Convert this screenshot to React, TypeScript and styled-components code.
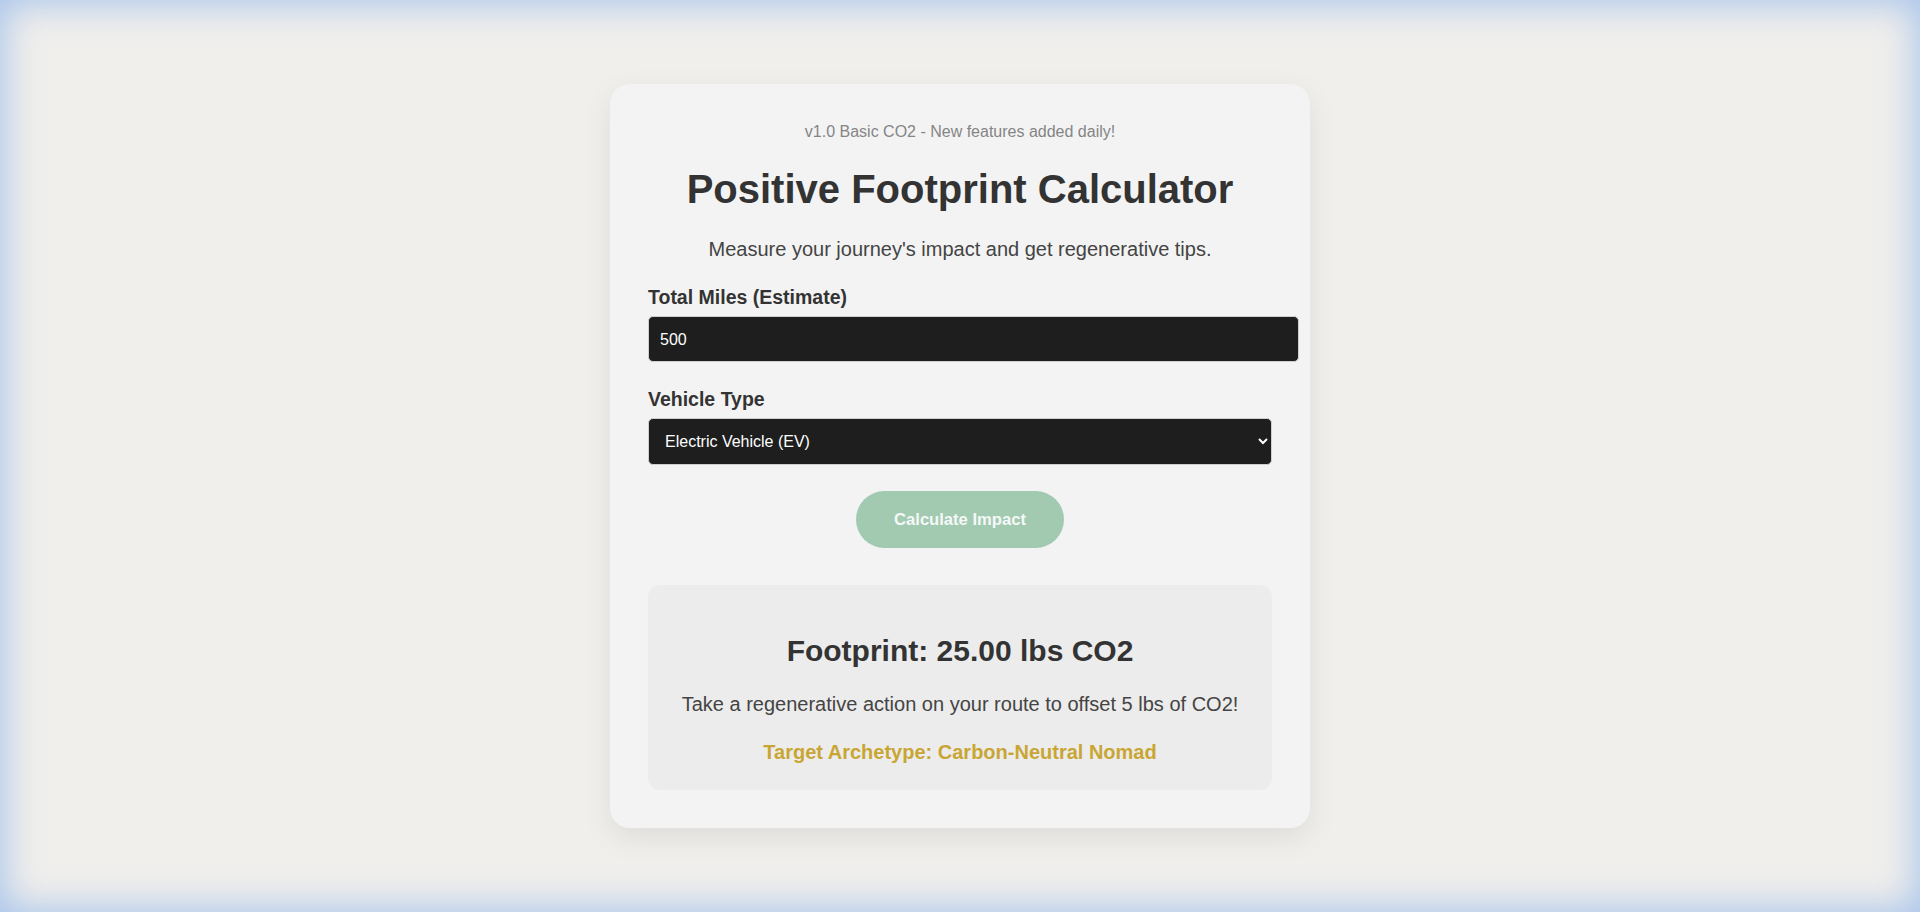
import React from "react";
import styled, { createGlobalStyle } from "styled-components";

const GlobalStyle = createGlobalStyle`
  html, body {
    margin: 0;
    padding: 0;
    background: #f0efec;
  }
  * { box-sizing: border-box; }
  body {
    font-family: "Liberation Sans", Arial, sans-serif;
    color: #333;
  }
`;

const Page = styled.main`
  min-height: 100vh;
  display: flex;
  align-items: center;
  justify-content: center;
  background: #f0efec;
  box-shadow: inset 0 0 36px 4px rgba(110, 160, 235, 0.55);
`;

const Card = styled.section`
  width: 700px;
  background: #f3f3f3;
  border-radius: 20px;
  padding: 39px 38px 38px;
  box-shadow: 0 10px 30px rgba(0, 0, 0, 0.08);
  display: flex;
  flex-direction: column;
`;

const Version = styled.p`
  margin: 0;
  font-size: 16px;
  color: #858585;
  text-align: center;
`;

const Title = styled.h1`
  margin: 25px 0 0;
  font-size: 40px;
  line-height: 46px;
  font-weight: 700;
  color: #333;
  text-align: center;
`;

const Subtitle = styled.p`
  margin: 26px 0 0;
  font-size: 20px;
  line-height: 23px;
  color: #444;
  text-align: center;
`;

const Field = styled.div<{ $gap: number }>`
  display: flex;
  flex-direction: column;
  margin-top: ${(p) => p.$gap}px;
`;

const Label = styled.label`
  font-size: 19.5px;
  line-height: 22px;
  font-weight: 700;
  color: #333;
  margin-bottom: 8px;
`;

const TextInput = styled.input`
  box-sizing: content-box;
  width: 100%;
  height: 19px;
  padding: 13px 14px 12px 11px;
  border: 1px solid #cfcfcf;
  border-radius: 5px;
  background: #1e1e1e;
  color: #fff;
  font-family: "Liberation Sans", Arial, sans-serif;
  font-size: 16px;
  outline: none;
`;

const Select = styled.select`
  width: 100%;
  height: 47px;
  padding: 0 10px 0 12px;
  border: 1px solid #cfcfcf;
  border-radius: 5px;
  background: #1e1e1e;
  color: #fff;
  font-family: "Liberation Sans", Arial, sans-serif;
  font-size: 16px;
  outline: none;
`;

const ButtonRow = styled.div`
  display: flex;
  justify-content: center;
  margin-top: 26px;
`;

const Button = styled.button`
  width: 208px;
  height: 57px;
  border: none;
  border-radius: 29px;
  background: #a1cab1;
  color: #f5f8f6;
  font-family: "Liberation Sans", Arial, sans-serif;
  font-size: 16.6px;
  font-weight: 700;
  cursor: pointer;
`;

const Result = styled.div`
  margin-top: 37px;
  background: #ececec;
  border-radius: 12px;
  padding: 24px 20px 26px;
  display: flex;
  flex-direction: column;
  align-items: center;
  text-align: center;
`;

const ResultTitle = styled.h2`
  margin: 25px 0 0;
  font-size: 30px;
  line-height: 34px;
  font-weight: 700;
  color: #333;
`;

const ResultText = styled.p<{ $accent?: boolean }>`
  margin: 25px 0 0;
  font-size: 20px;
  line-height: 23px;
  font-weight: ${(p) => (p.$accent ? 700 : 400)};
  color: ${(p) => (p.$accent ? "#c9a634" : "#444")};
`;

export default function App() {
  return (
    <>
      <GlobalStyle />
      <Page>
        <Card>
          <Version>v1.0 Basic CO2 - New features added daily!</Version>
          <Title>Positive Footprint Calculator</Title>
          <Subtitle>Measure your journey's impact and get regenerative tips.</Subtitle>
          <Field $gap={25}>
            <Label htmlFor="miles">Total Miles (Estimate)</Label>
            <TextInput id="miles" type="number" defaultValue="500" />
          </Field>
          <Field $gap={26}>
            <Label htmlFor="vehicle">Vehicle Type</Label>
            <Select id="vehicle" defaultValue="ev">
              <option value="ev">Electric Vehicle (EV)</option>
              <option value="gas">Gas Car</option>
              <option value="hybrid">Hybrid</option>
            </Select>
          </Field>
          <ButtonRow>
            <Button>Calculate Impact</Button>
          </ButtonRow>
          <Result>
            <ResultTitle>Footprint: 25.00 lbs CO2</ResultTitle>
            <ResultText>Take a regenerative action on your route to offset 5 lbs of CO2!</ResultText>
            <ResultText $accent>Target Archetype: Carbon-Neutral Nomad</ResultText>
          </Result>
        </Card>
      </Page>
    </>
  );
}
